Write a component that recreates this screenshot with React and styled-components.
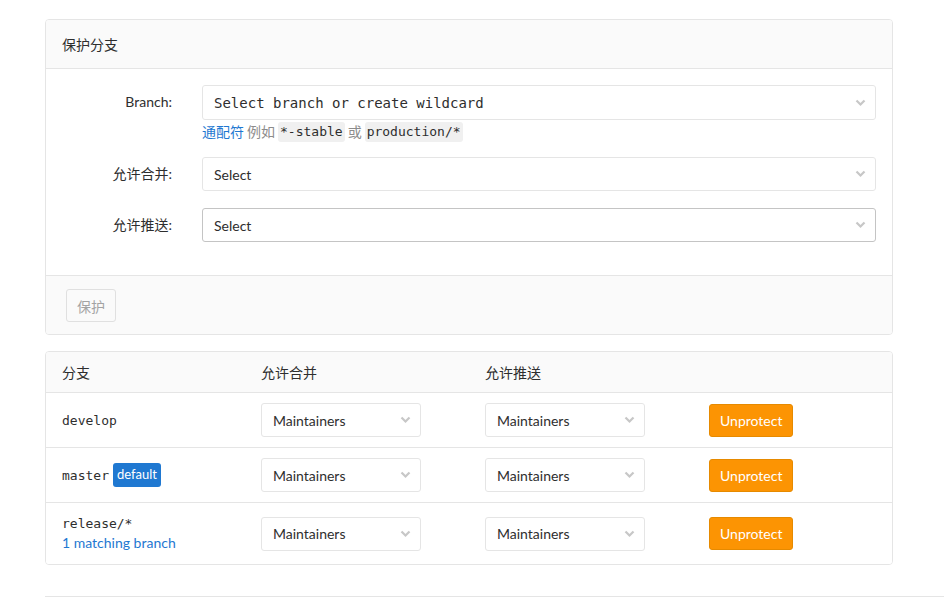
import styled, { createGlobalStyle } from "styled-components";

const GlobalStyle = createGlobalStyle`
	body {
		margin: 0;
		background: #fff;
		color: #2e2e2e;
		font-family: Lato, "Noto Sans CJK SC", sans-serif;
		font-size: 14px;
	}
	* {
		box-sizing: border-box;
	}
`;

const Page = styled.div`
	padding: 19px 0 0 45px;
	overflow: hidden;
`;

const Card = styled.div`
	width: 848px;
	border: 1px solid #e5e5e5;
	border-radius: 4px;
	overflow: hidden;
	margin-bottom: 16px;
`;

const CardHeader = styled.div`
	height: 49px;
	display: flex;
	align-items: center;
	padding: 0 16px;
	background: #fafafa;
	border-bottom: 1px solid #e5e5e5;
`;

const CardBody = styled.div`
	padding: 16px 16px 16px;
	display: flex;
	flex-direction: column;
	gap: 17px;
`;

const FormRow = styled.div`
	display: grid;
	grid-template-columns: 110px 1fr;
	column-gap: 30px;
	align-items: start;
	padding-bottom: ${(p) => p.$last ? "17px" : "0"};
`;

const Label = styled.label`
	text-align: right;
	line-height: 34px;
`;

const Field = styled.div`
	display: flex;
	flex-direction: column;
`;

const SelectBox = styled.div`
	position: relative;
	height: ${(p) => p.$tall ? "35px" : "34px"};
	width: ${(p) => p.$width || "100%"};
	display: flex;
	align-items: center;
	padding: 0 30px 0 11px;
	border: 1px solid ${(p) => p.$dark ? "#c4c4c4" : "#e5e5e5"};
	border-radius: 3px;
	background: #fff;
	font-family: ${(p) => p.$mono ? "\"DejaVu Sans Mono\", monospace" : "inherit"};
	color: #2e2e2e;
	white-space: nowrap;
`;

const Chevron = styled.svg`
	position: absolute;
	right: 9px;
	top: 50%;
	margin-top: -4px;
`;

const Help = styled.div`
	margin: 2px 0 -2px;
	display: flex;
	align-items: center;
	gap: 3px;
	font-size: 14px;
	color: #8c8c8c;
	line-height: 18px;
`;

const HelpLink = styled.span`
	color: #1f78d1;
`;

const Code = styled.code`
	font-family: "DejaVu Sans Mono", monospace;
	font-size: 13px;
	color: #2e2e2e;
	background: #f0f0f0;
	border-radius: 3px;
	padding: 1px 2px;
`;

const CardFooter = styled.div`
	padding: 13px 20px 12px;
	background: #fafafa;
	border-top: 1px solid #e5e5e5;
`;

const DisabledButton = styled.button`
	height: 33px;
	width: 50px;
	padding: 0;
	font: inherit;
	color: #a3a3a3;
	background: #fafafa;
	border: 1px solid #e0e0e0;
	border-radius: 3px;
`;

const Grid = styled.div`
	display: grid;
	grid-template-columns: 199px 224px 224px 1fr;
	align-items: center;
	min-height: ${(p) => p.$height};
	background: ${(p) => p.$head ? "#fafafa" : "#fff"};
	border-top: ${(p) => p.$first ? "none" : "1px solid #e5e5e5"};
`;

const Cell = styled.div`
	padding: 0 16px;
`;

const Branch = styled.div`
	display: flex;
	align-items: center;
	gap: 4px;
	font-family: "DejaVu Sans Mono", monospace;
	font-size: 13px;
`;

const Badge = styled.span`
	font-family: Lato, sans-serif;
	font-size: 13px;
	color: #fff;
	background: #1f78d1;
	border-radius: 3px;
	padding: 2px 4px 3px;
	line-height: 19px;
`;

const Matching = styled.div`
	color: #1f78d1;
	font-size: 14px;
	margin-top: 3px;
`;

const Unprotect = styled.button`
	height: 33px;
	padding: 0 10px;
	font: inherit;
	color: #fff;
	background: #fc9403;
	border: 1px solid #e68a00;
	border-radius: 3px;
`;

const Divider = styled.div`
	margin-top: 31px;
	border-top: 1px solid #e5e5e5;
	height: 2px;
`;

const Select = ({ children, ...rest }) => (
	<SelectBox {...rest}>
		{children}
		<Chevron width="11" height="8" viewBox="0 0 11 8">
			<polyline points="1.5,1.5 5.5,5.5 9.5,1.5" fill="none" stroke="#c7c7c7" strokeWidth="2.2" />
		</Chevron>
	</SelectBox>
);

const rows = [
	{ name: "develop", height: "55px" },
	{ name: "master", badge: true, height: "55px" },
	{ name: "release/*", matching: "1 matching branch", height: "62px" },
];

const App = () => {
	return (
		<>
			<GlobalStyle />
			<Page>
				<Card>
					<CardHeader>保护分支</CardHeader>
					<CardBody>
						<FormRow>
							<Label>Branch:</Label>
							<Field>
								<Select $mono $tall>Select branch or create wildcard</Select>
								<Help>
									<HelpLink>通配符</HelpLink> 例如 <Code>*-stable</Code>或<Code>production/*</Code>
								</Help>
							</Field>
						</FormRow>
						<FormRow>
							<Label>允许合并:</Label>
							<Select>Select</Select>
						</FormRow>
						<FormRow $last>
							<Label>允许推送:</Label>
							<Select $dark>Select</Select>
						</FormRow>
					</CardBody>
					<CardFooter>
						<DisabledButton disabled>保护</DisabledButton>
					</CardFooter>
				</Card>

				<Card>
					<Grid $head $first $height="40px">
						<Cell>分支</Cell>
						<Cell>允许合并</Cell>
						<Cell>允许推送</Cell>
						<Cell />
					</Grid>
					{rows.map((row) => (
						<Grid key={row.name} $height={row.height}>
							<Cell>
								<Branch>
									{row.name}
									{row.badge && <Badge>default</Badge>}
								</Branch>
								{row.matching && <Matching>{row.matching}</Matching>}
							</Cell>
							<Cell>
								<Select $width="160px">Maintainers</Select>
							</Cell>
							<Cell>
								<Select $width="160px">Maintainers</Select>
							</Cell>
							<Cell>
								<Unprotect>Unprotect</Unprotect>
							</Cell>
						</Grid>
					))}
				</Card>
				<Divider />
			</Page>
		</>
	);
};

export default App;
